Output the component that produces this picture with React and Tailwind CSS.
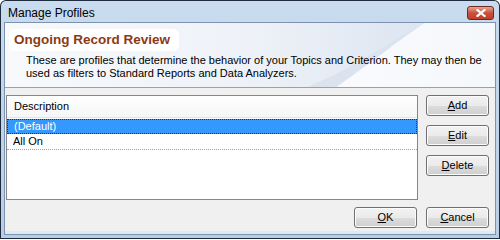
export default function App() {
  const font = { fontFamily: '"Liberation Sans", Arial, sans-serif' };

  return (
    <div
      className="w-[500px] h-[239px] bg-[#1e2c3e] p-[1px] rounded-t-[6px] overflow-hidden"
      style={font}
    >
      <div className="h-full flex flex-col bg-gradient-to-b from-[#c9dbef] to-[#b9cee6] rounded-t-[5px]">
        {/* Title bar */}
        <div className="h-[21px] flex items-center justify-between pl-[7px] pr-[5px]">
          <span className="text-[12px] text-black pt-[2px]">Manage Profiles</span>
          <button className="w-[27px] h-[14px] mt-[3px] rounded-[3px] border border-[#6b2a22] bg-gradient-to-b from-[#e8a494] via-[#c9513c] to-[#c13f2a] flex items-center justify-center">
            <svg width="10" height="8" viewBox="0 0 10 8">
              <path d="M1.5 1 L8.5 7 M8.5 1 L1.5 7" stroke="#fff" strokeWidth="2.2" strokeLinecap="square" />
            </svg>
          </button>
        </div>

        {/* Client area */}
        <div className="flex-1 mx-[3px] mb-[3px] border border-[#7d93ad] flex flex-col bg-[#f0f0f0]">
          {/* Header */}
          <div className="relative h-[65px] border-b border-[#a0a0a0] bg-gradient-to-r from-[#f7f9fc] via-[#eef2f8] to-[#d6e0ee] overflow-hidden">
            <svg className="absolute inset-0" width="492" height="65" viewBox="0 0 492 65">
              <path d="M492 0 L420 0 C395 10 360 40 300 65 L492 65 Z" fill="#ffffff" opacity="0.75" />
              <path d="M420 0 C400 12 380 30 330 65 L300 65 C360 40 395 10 420 0 Z" fill="#c6d3e6" opacity="0.6" />
            </svg>
            <div className="relative pl-[4px] pt-[4px]">
              <div className="inline-flex items-center h-[22px] px-[5px] pr-[9px] rounded-[6px] bg-white">
                <span className="text-[13.5px] font-bold text-[#8c3b12]">Ongoing Record Review</span>
              </div>
              <p className="mt-[3px] ml-[17px] text-[11px] leading-[13px] text-black">
                These are profiles that determine the behavior of your Topics and Criterion. They may then be
                <br />
                used as filters to Standard Reports and Data Analyzers.
              </p>
            </div>
          </div>

          {/* Body */}
          <div className="flex-1 flex flex-col pl-[1px] pr-[6px] pt-[7px]">
            <div className="flex gap-[8px]">
              <div className="w-[412px] h-[105px] border border-[#828790] bg-white flex flex-col">
                <div className="h-[22px] flex items-center pl-[7px] border-b border-[#e3e3e3] bg-gradient-to-b from-white to-[#f5f6f7]">
                  <span className="text-[11px] text-black">Description</span>
                </div>
                <div className="mt-[1px] h-[15px] flex items-center pl-[6px] bg-[#3399ff] border border-dotted border-[#1a3050]">
                  <span className="text-[11px] text-white">(Default)</span>
                </div>
                <div className="h-[16px] flex items-center pl-[6px] border-b border-dotted border-[#a0a0a0]">
                  <span className="text-[11px] text-black">All On</span>
                </div>
              </div>
              <div className="flex flex-col gap-[9px]">
                <Btn u="A" rest="dd" />
                <Btn u="E" rest="dit" />
                <Btn u="D" rest="elete" />
              </div>
            </div>
            <div className="flex justify-end gap-[9px] mt-[7px]">
              <Btn u="O" rest="K" />
              <Btn u="C" rest="ancel" />
            </div>
          </div>
          <div className="h-[3px] bg-[#dde9f5]" />
        </div>
      </div>
    </div>
  );
}

function Btn({ u, rest }) {
  return (
    <button className="w-[63px] h-[21px] rounded-[3px] border border-[#707070] bg-[linear-gradient(to_bottom,#f2f2f2_0%,#ebebeb_50%,#dddddd_51%,#cfcfcf_100%)] shadow-[inset_0_0_0_1px_#fcfcfc] flex items-center justify-center text-[11px] text-black">
      <span>
        <span className="underline">{u}</span>
        {rest}
      </span>
    </button>
  );
}
